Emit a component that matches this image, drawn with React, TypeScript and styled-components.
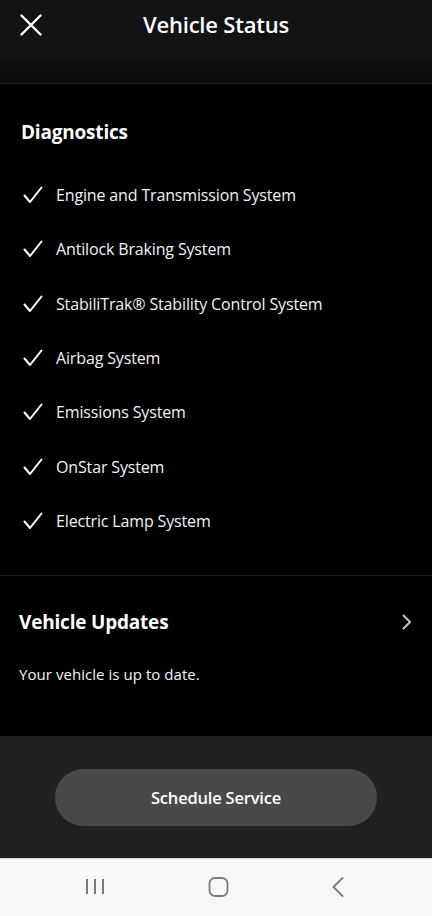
import styled, { createGlobalStyle } from 'styled-components';

const GlobalStyle = createGlobalStyle`
  html, body {
    margin: 0;
    padding: 0;
    background: #000;
  }
  body {
    font-family: "Open Sans", "Noto Sans", sans-serif;
    color: #fff;
  }
  * {
    box-sizing: border-box;
  }
`;

const diagnostics = [
  'Engine and Transmission System',
  'Antilock Braking System',
  'StabiliTrak® Stability Control System',
  'Airbag System',
  'Emissions System',
  'OnStar System',
  'Electric Lamp System',
];

const CheckIcon = () => (
  <svg width="20" height="18" viewBox="0 0 20 18" fill="none">
    <path d="M1.5 9.5 L7 16 L18.5 1.5" stroke="#fff" strokeWidth="2" strokeLinecap="round" strokeLinejoin="round" />
  </svg>
);

export default function App() {
  return (
    <Screen>
      <GlobalStyle />
      <Header>
        <CloseButton aria-label="Close">
          <svg width="22" height="22" viewBox="0 0 22 22" fill="none">
            <path d="M1.5 1.5 L20.5 20.5 M20.5 1.5 L1.5 20.5" stroke="#fff" strokeWidth="2.4" strokeLinecap="round" />
          </svg>
        </CloseButton>
        <Title>Vehicle Status</Title>
      </Header>
      <HeaderShade />

      <Content>
        <Diagnostics>
          <SectionTitle>Diagnostics</SectionTitle>
          <CheckList>
            {diagnostics.map((item) => (
              <CheckRow key={item}>
                <CheckIcon />
                <span>{item}</span>
              </CheckRow>
            ))}
          </CheckList>
        </Diagnostics>

        <Updates>
          <UpdatesHead>
            <SectionTitle>Vehicle Updates</SectionTitle>
            <svg width="10" height="16" viewBox="0 0 10 16" fill="none">
              <path d="M1.5 1.5 L8 8 L1.5 14.5" stroke="#c4c4c4" strokeWidth="2" strokeLinecap="round" strokeLinejoin="round" />
            </svg>
          </UpdatesHead>
          <UpdatesText>Your vehicle is up to date.</UpdatesText>
        </Updates>
      </Content>

      <Footer>
        <ServiceButton>Schedule Service</ServiceButton>
      </Footer>

      <NavBar>
        <svg width="20" height="17" viewBox="0 0 20 17" fill="none">
          <path d="M2 1 V16 M10 1 V16 M18 1 V16" stroke="#7b7b7b" strokeWidth="2" />
        </svg>
        <svg width="21" height="20" viewBox="0 0 21 20" fill="none">
          <rect x="1.5" y="1" width="18" height="18" rx="5.5" stroke="#7b7b7b" strokeWidth="1.8" />
        </svg>
        <svg width="12" height="20" viewBox="0 0 12 20" fill="none">
          <path d="M10.5 1 L1.5 10 L10.5 19" stroke="#7b7b7b" strokeWidth="1.8" strokeLinecap="round" strokeLinejoin="round" />
        </svg>
      </NavBar>
    </Screen>
  );
}

const Screen = styled.div`
  width: 432px;
  height: 916px;
  display: flex;
  flex-direction: column;
  background: #000;
  overflow: hidden;
`;

const Header = styled.header`
  position: relative;
  height: 60px;
  flex-shrink: 0;
  display: flex;
  align-items: center;
  justify-content: center;
  background: #121314;
`;

const CloseButton = styled.button`
  position: absolute;
  left: 20px;
  top: 14px;
  padding: 0;
  border: none;
  background: none;
  display: flex;
`;

const Title = styled.h1`
  margin: 0 0 12px;
  font-size: 22px;
  font-weight: 600;
  letter-spacing: -0.2px;
  line-height: 28px;
`;

const HeaderShade = styled.div`
  height: 24px;
  flex-shrink: 0;
  background: linear-gradient(180deg, #0e0f10 0%, #0a0b0c 100%);
  border-bottom: 1px solid #1f1f1f;
`;

const Content = styled.main`
  flex: 1;
  display: flex;
  flex-direction: column;
`;

const Diagnostics = styled.section`
  padding: 34px 21px 27px 21px;
  border-bottom: 1px solid #1c1c1c;
`;

const SectionTitle = styled.h2`
  margin: 0;
  font-size: 19px;
  font-weight: 700;
  line-height: 28px;
  letter-spacing: -0.2px;
`;

const CheckList = styled.ul`
  list-style: none;
  margin: 22px 0 0;
  padding: 0;
`;

const CheckRow = styled.li`
  display: flex;
  align-items: center;
  gap: 13px;
  height: 54.3px;
  padding-left: 2px;
  font-size: 16px;
  letter-spacing: -0.15px;
  color: #f2f2f2;
`;

const Updates = styled.section`
  flex: 1;
  padding: 32px 20px 0 19px;
`;

const UpdatesHead = styled.div`
  display: flex;
  align-items: center;
  justify-content: space-between;
`;

const UpdatesText = styled.p`
  margin: 27px 0 0;
  font-size: 15px;
  line-height: 22px;
  letter-spacing: 0.05px;
  color: #f2f2f2;
`;

const Footer = styled.footer`
  height: 122px;
  flex-shrink: 0;
  padding: 33px 55px 0;
  background: #212121;
`;

const ServiceButton = styled.button`
  width: 100%;
  height: 57px;
  border: none;
  border-radius: 29px;
  background: #494949;
  color: #fff;
  font-family: "Open Sans", "Noto Sans", sans-serif;
  font-size: 16.5px;
  font-weight: 600;
  letter-spacing: -0.2px;
`;

const NavBar = styled.nav`
  height: 58px;
  flex-shrink: 0;
  display: flex;
  align-items: center;
  justify-content: space-between;
  padding: 0 88px 2px 85px;
  background: #f7f7f7;
  border-top: 1px solid #d4d4d4;
`;
